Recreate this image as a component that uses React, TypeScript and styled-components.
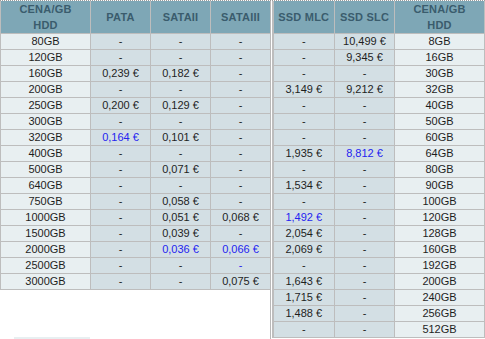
import React from "react";
import styled, { createGlobalStyle } from "styled-components";

const GlobalStyle = createGlobalStyle`
  body {
    margin: 0;
    background: #ffffff;
    font-family: "Liberation Sans", Arial, sans-serif;
  }
`;

const Page = styled.div`
  display: flex;
  align-items: flex-start;
  width: 485px;
  height: 339px;
  overflow: hidden;
  border-top: 1px dotted #9a9a9a;
  box-sizing: border-box;
`;

const LeftColumn = styled.div`
  display: flex;
  flex-direction: column;
  width: 270px;
`;

const Divider = styled.div`
  width: 2px;
  height: 339px;
  margin-right: 1px;
  background: #b9b9b9;
`;

const Table = styled.table<{ $width: number; $dotted?: boolean }>`
  width: ${(p) => p.$width}px;
  table-layout: fixed;
  border-collapse: collapse;
  font-size: 11px;
  border-left: ${(p) => (p.$dotted ? "1px dotted #9a9a9a" : "2px solid #bdbdbd")};
`;

const Head = styled.th`
  height: 32px;
  padding: 0;
  background: #7ea7b6;
  color: #3a5c6d;
  font-weight: bold;
  font-size: 11px;
  line-height: 16px;
  letter-spacing: 0.2px;
  text-align: center;
  border: 1px solid #bdbdbd;
  border-top: none;
`;

const Cell = styled.td<{ $size?: boolean; $blue?: boolean }>`
  height: 15px;
  padding: 0;
  line-height: 15px;
  text-align: center;
  white-space: nowrap;
  background: ${(p) => (p.$size ? "#e8eff1" : "#d3dfe4")};
  color: ${(p) => (p.$blue ? "#2424f0" : "#1e1e1e")};
  border: 1px solid #bdbdbd;
`;

const Stub = styled.div`
  margin: 47px 0 0 14px;
  width: 76px;
  height: 2px;
  background: #e8eff1;
`;

type Value = string | [string, "blue"];

const left: [string, Value, Value, Value][] = [
  ["80GB", "-", "-", "-"],
  ["120GB", "-", "-", "-"],
  ["160GB", "0,239 €", "0,182 €", "-"],
  ["200GB", "-", "-", "-"],
  ["250GB", "0,200 €", "0,129 €", "-"],
  ["300GB", "-", "-", "-"],
  ["320GB", ["0,164 €", "blue"], "0,101 €", "-"],
  ["400GB", "-", "-", "-"],
  ["500GB", "-", "0,071 €", "-"],
  ["640GB", "-", "-", "-"],
  ["750GB", "-", "0,058 €", "-"],
  ["1000GB", "-", "0,051 €", "0,068 €"],
  ["1500GB", "-", "0,039 €", "-"],
  ["2000GB", "-", ["0,036 €", "blue"], ["0,066 €", "blue"]],
  ["2500GB", "-", "-", ["-", "blue"]],
  ["3000GB", "-", "-", "0,075 €"],
];

const right: [Value, Value, string][] = [
  ["-", "10,499 €", "8GB"],
  ["-", "9,345 €", "16GB"],
  ["-", "-", "30GB"],
  ["3,149 €", "9,212 €", "32GB"],
  ["-", "-", "40GB"],
  ["-", "-", "50GB"],
  ["-", "-", "60GB"],
  ["1,935 €", ["8,812 €", "blue"], "64GB"],
  ["-", "-", "80GB"],
  ["1,534 €", "-", "90GB"],
  ["-", "-", "100GB"],
  [["1,492 €", "blue"], "-", "120GB"],
  ["2,054 €", "-", "128GB"],
  ["2,069 €", "-", "160GB"],
  ["-", "-", "192GB"],
  ["1,643 €", "-", "200GB"],
  ["1,715 €", "-", "240GB"],
  ["1,488 €", "-", "256GB"],
  ["-", "-", "512GB"],
];

const Price = ({ v }: { v: Value }) =>
  typeof v === "string" ? <Cell>{v}</Cell> : <Cell $blue>{v[0]}</Cell>;

const App = () => (
  <>
    <GlobalStyle />
    <Page>
      <LeftColumn>
        <Table $width={270} $dotted>
          <colgroup>
            <col style={{ width: 90 }} />
            <col style={{ width: 60 }} />
            <col style={{ width: 60 }} />
            <col style={{ width: 60 }} />
          </colgroup>
          <thead>
            <tr>
              <Head>
                CENA/GB
                <br />
                HDD
              </Head>
              <Head>PATA</Head>
              <Head>SATAII</Head>
              <Head>SATAIII</Head>
            </tr>
          </thead>
          <tbody>
            {left.map(([size, a, b, c]) => (
              <tr key={size}>
                <Cell $size>{size}</Cell>
                <Price v={a} />
                <Price v={b} />
                <Price v={c} />
              </tr>
            ))}
          </tbody>
        </Table>
        <Stub />
      </LeftColumn>
      <Divider />
      <Table $width={212}>
        <colgroup>
          <col style={{ width: 62 }} />
          <col style={{ width: 60 }} />
          <col style={{ width: 90 }} />
        </colgroup>
        <thead>
          <tr>
            <Head>SSD MLC</Head>
            <Head>SSD SLC</Head>
            <Head>
              CENA/GB
              <br />
              HDD
            </Head>
          </tr>
        </thead>
        <tbody>
          {right.map(([mlc, slc, size]) => (
            <tr key={size}>
              <Price v={mlc} />
              <Price v={slc} />
              <Cell $size>{size}</Cell>
            </tr>
          ))}
        </tbody>
      </Table>
    </Page>
  </>
);

export default App;
